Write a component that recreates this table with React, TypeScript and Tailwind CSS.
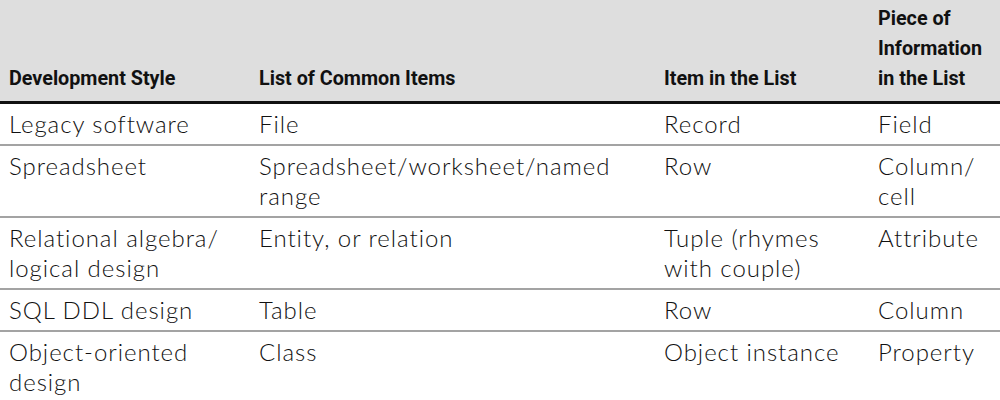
const headers = ['Development Style', 'List of Common Items', 'Item in the List', 'Piece of Information in the List']

const rows = [
  ['Legacy software', 'File', 'Record', 'Field'],
  ['Spreadsheet', 'Spreadsheet/worksheet/named range', 'Row', 'Column/ cell'],
  ['Relational algebra/ logical design', 'Entity, or relation', 'Tuple (rhymes with couple)', 'Attribute'],
  ['SQL DDL design', 'Table', 'Row', 'Column'],
  ['Object-oriented design', 'Class', 'Object instance', 'Property'],
]

const cols = 'grid grid-cols-[250px_405px_214px_1fr]'

export default function App() {
  return (
    <div className="w-[1000px] h-[400px] overflow-hidden bg-white">
      <div className={`${cols} bg-[#dedede] border-b-[3px] border-[#111] items-end pt-[3px] pb-[8px]`}>
        {headers.map(h => (
          <div key={h} className="pl-[9px]">
            <div className="origin-left scale-x-[0.94] w-[130%] text-[21px] leading-[30px] font-bold text-[#111] [font-family:Roboto,sans-serif]">
              {h === headers[3] ? (
                <>Piece of<br />Information<br />in the List</>
              ) : h}
            </div>
          </div>
        ))}
      </div>
      {rows.map((r, i) => (
        <div key={i} className={`${cols} border-b-2 border-[#a3a3a3] py-[5px]`}>
          {r.map((c, j) => (
            <div
              key={j}
              className="pl-[9px] pr-2 text-[24px] leading-[30px] font-light tracking-[0.95px] text-[#111] [font-family:Lato,sans-serif]"
            >
              {c}
            </div>
          ))}
        </div>
      ))}
    </div>
  )
}
